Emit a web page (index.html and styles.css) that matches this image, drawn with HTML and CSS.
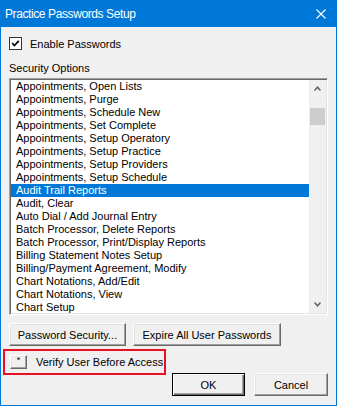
FILE: index.html
```html
<!DOCTYPE html>
<html lang="en">
<head>
    <meta charset="UTF-8">
    <meta name="viewport" content="width=device-width, initial-scale=1.0">
    <title>Practice Passwords Setup</title>
    <link rel="stylesheet" href="styles.css">
</head>
<body>
    <div class="window">
        <div class="title-bar">
            <span class="title">Practice Passwords Setup</span>
            <svg class="close" width="10" height="10" viewBox="0 0 10 10">
                <path d="M0.5 0.5 L9.5 9.5 M9.5 0.5 L0.5 9.5" stroke="#fff" stroke-width="1.1" fill="none"/>
            </svg>
        </div>

        <div class="content">
            <div class="check-row">
                <span class="checkbox">
                    <svg width="9" height="9" viewBox="0 0 9 9">
                        <path d="M1.2 4.2 L3.4 6.5 L7.8 1.8" stroke="#000" stroke-width="1.8" fill="none"/>
                    </svg>
                </span>
                <span>Enable Passwords</span>
            </div>

            <div class="group-label">Security Options</div>

            <div class="listbox">
                <ul class="items">
                    <li>Appointments, Open Lists</li>
                    <li>Appointments, Purge</li>
                    <li>Appointments, Schedule New</li>
                    <li>Appointments, Set Complete</li>
                    <li>Appointments, Setup Operatory</li>
                    <li>Appointments, Setup Practice</li>
                    <li>Appointments, Setup Providers</li>
                    <li>Appointments, Setup Schedule</li>
                    <li class="selected">Audit Trail Reports</li>
                    <li>Audit, Clear</li>
                    <li>Auto Dial / Add Journal Entry</li>
                    <li>Batch Processor, Delete Reports</li>
                    <li>Batch Processor, Print/Display Reports</li>
                    <li>Billing Statement Notes Setup</li>
                    <li>Billing/Payment Agreement, Modify</li>
                    <li>Chart Notations, Add/Edit</li>
                    <li>Chart Notations, View</li>
                    <li>Chart Setup</li>
                </ul>
                <div class="scrollbar">
                    <div class="arrow">
                        <svg width="7" height="5" viewBox="0 0 7 5">
                            <path d="M0.5 4.5 L3.5 1.2 L6.5 4.5" stroke="#606060" stroke-width="1.5" fill="none"/>
                        </svg>
                    </div>
                    <div class="track"><div class="thumb"></div></div>
                    <div class="arrow">
                        <svg width="7" height="5" viewBox="0 0 7 5">
                            <path d="M0.5 0.5 L3.5 3.8 L6.5 0.5" stroke="#606060" stroke-width="1.5" fill="none"/>
                        </svg>
                    </div>
                </div>
            </div>

            <div class="button-row">
                <button class="btn btn-security">Password Security...</button>
                <button class="btn btn-expire">Expire All User Passwords</button>
            </div>

            <div class="verify-row">
                <button class="btn btn-small">*</button>
                <span>Verify User Before Access</span>
            </div>

            <div class="dialog-buttons">
                <button class="btn btn-default">OK</button>
                <button class="btn btn-cancel">Cancel</button>
            </div>
        </div>
    </div>
</body>
</html>
```

FILE: styles.css
```css
body {
    margin: 0;
    padding: 0;
    font-family: "Liberation Sans", Arial, sans-serif;
    font-size: 11px;
    color: #000;
    background: #f0f0f0;
}

.window {
    width: 337px;
    height: 406px;
    box-sizing: border-box;
    border: 1px solid #0078d7;
    background: #f0f0f0;
    display: flex;
    flex-direction: column;
}

.title-bar {
    height: 25px;
    background: #0078d7;
    color: #fff;
    display: flex;
    align-items: center;
    justify-content: space-between;
    padding: 0 10px 1px 4px;
}

.title {
    font-size: 12px;
    letter-spacing: -0.4px;
}

.close {
    display: block;
    margin-top: 1px;
}

.content {
    padding: 0 8px 0 8px;
    display: flex;
    flex-direction: column;
}

.check-row {
    margin-top: 10px;
    height: 13px;
    display: flex;
    align-items: center;
    gap: 8px;
}

.checkbox {
    width: 13px;
    height: 13px;
    box-sizing: border-box;
    background: #fff;
    border: 1px solid #333;
    display: flex;
    align-items: center;
    justify-content: center;
}

.checkbox svg {
    display: block;
}

.group-label {
    margin-top: 12px;
    line-height: 13px;
    height: 13px;
}

.listbox {
    margin-top: 3px;
    width: 319px;
    height: 237px;
    box-sizing: border-box;
    background: #fff;
    border-top: 1px solid #a0a0a0;
    border-left: 1px solid #a0a0a0;
    border-right: 1px solid #fff;
    border-bottom: 1px solid #fff;
    box-shadow: inset 1px 1px 0 #696969, inset -1px -1px 0 #e3e3e3;
    padding: 1px;
    display: flex;
    overflow: hidden;
}

.items {
    list-style: none;
    margin: 0;
    padding: 0;
    flex: 1;
    overflow: hidden;
}

.items li {
    height: 13px;
    line-height: 13px;
    padding-left: 5px;
    white-space: nowrap;
}

.items li.selected {
    background: #0078d7;
    color: #fff;
}

.scrollbar {
    width: 17px;
    background: #f0f0f0;
    display: flex;
    flex-direction: column;
}

.arrow {
    height: 17px;
    display: flex;
    align-items: center;
    justify-content: center;
}

.arrow svg {
    display: block;
}

.track {
    flex: 1;
    padding: 11px 1px 0 1px;
}

.thumb {
    height: 17px;
    background: #cdcdcd;
}

.btn {
    font-family: "Liberation Sans", Arial, sans-serif;
    font-size: 11px;
    color: #000;
    background: #f0f0f0;
    height: 23px;
    padding: 0;
    box-sizing: border-box;
    border-top: 1px solid #fff;
    border-left: 1px solid #fff;
    border-right: 1px solid #696969;
    border-bottom: 1px solid #696969;
    box-shadow: inset -1px -1px 0 #a0a0a0, inset 1px 1px 0 #e3e3e3;
    border-radius: 0;
}

.button-row {
    margin-top: 8px;
    display: flex;
    gap: 7px;
}

.btn-security {
    width: 117px;
}

.btn-expire {
    width: 148px;
}

.verify-row {
    margin: 3px 0 -2px -6px;
    width: 163px;
    height: 26px;
    box-sizing: border-box;
    border: 2px solid #e81123;
    padding-left: 5px;
    display: flex;
    align-items: center;
    gap: 9px;
}

.btn-small {
    width: 17px;
    height: 14px;
    font-size: 9px;
    line-height: 8px;
    padding-bottom: 4px;
}

.dialog-buttons {
    display: flex;
    justify-content: flex-end;
    gap: 9px;
}

.btn-default {
    width: 73px;
    border: 1px solid #000;
    box-shadow: inset 1px 1px 0 #fff, inset -1px -1px 0 #696969, inset -2px -2px 0 #a0a0a0;
}

.btn-cancel {
    width: 74px;
}
```
